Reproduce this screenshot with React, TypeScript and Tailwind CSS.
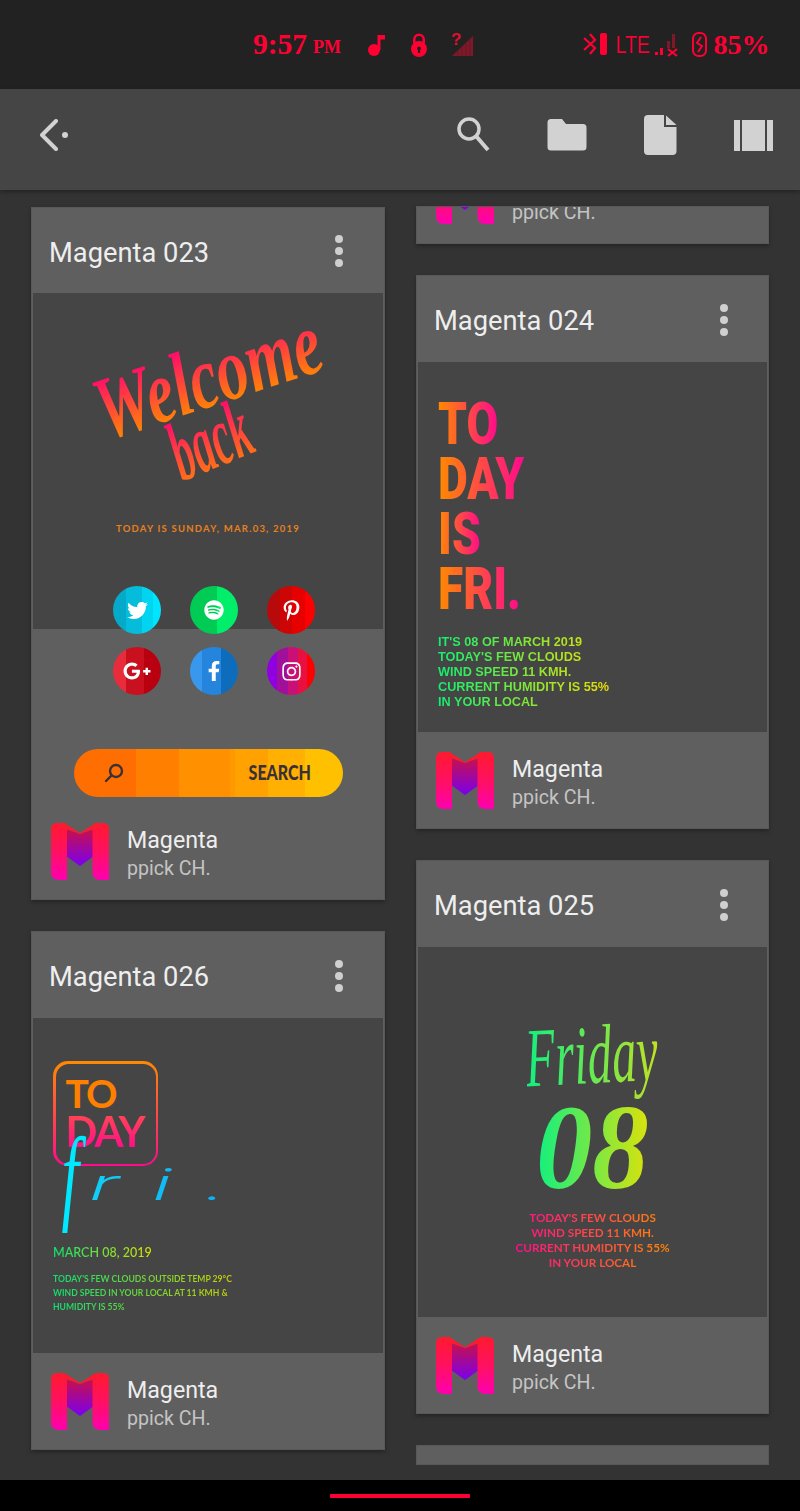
import React from "react";
import {
  FaTwitter,
  FaSpotify,
  FaPinterestP,
  FaGooglePlusG,
  FaFacebookF,
  FaInstagram,
} from "react-icons/fa";

const roboto = "font-['Roboto',sans-serif]";
const lato = "font-['Lato',sans-serif]";
const serif = "font-['Liberation_Serif',serif]";

const Logo = () => (
  <svg width="58" height="57" viewBox="0 0 58 57" className="shrink-0">
    <defs>
      <linearGradient id="logoOuter" x1="0" y1="0" x2="0" y2="1">
        <stop offset="0" stopColor="#ff1a2e" />
        <stop offset="0.5" stopColor="#ff1060" />
        <stop offset="1" stopColor="#ff00b0" />
      </linearGradient>
      <linearGradient id="logoInner" x1="0" y1="0" x2="0" y2="1">
        <stop offset="0" stopColor="#c8104a" />
        <stop offset="1" stopColor="#7a00ee" />
      </linearGradient>
    </defs>
    <path d="M15 6L29 11L43 6V33L29 43L15 33Z" fill="url(#logoInner)" />
    <path
      d="M6 0H13L16 2V57H8Q0 57 0 49V6Q0 0 6 0ZM45 0H52Q58 0 58 6V57H49.500Q41.500 57 41.500 49V2Z"
      fill="url(#logoOuter)"
    />
    <path d="M13 0L29 10L45 0V5L29 11L13 5Z" fill="#ff1a2e" />
  </svg>
);

type CardProps = {
  title: string;
  headerClass?: string;
  previewClass: string;
  children: React.ReactNode;
};

const Footer = () => (
  <div className="flex h-[96px] shrink-0 items-center pl-[19px]">
    <Logo />
    <div className={`ml-[18px] mt-[6px] ${roboto}`}>
      <p className="text-[23.200px] leading-[29px] text-[#eeeeee]">Magenta</p>
      <p className="text-[19.600px] leading-[28px] text-[#c4c4c4]">ppick CH.</p>
    </div>
  </div>
);

const Card = ({ title, headerClass = "h-[86px]", previewClass, children }: CardProps) => (
  <div className="border border-[#585858] bg-[#5f5f5f] shadow-[0_2px_4px_rgba(0,0,0,0.3)]">
    <div className={`flex items-center pt-[5px] pl-[17px] ${headerClass}`}>
      <span className={`${roboto} w-[286px] text-[27.300px] text-[#eeeeee]`}>{title}</span>
      <div className="-mt-[4px] flex flex-col gap-[4px]">
        <div className="h-[8px] w-[8px] rounded-full bg-[#cfcfcf]" />
        <div className="h-[8px] w-[8px] rounded-full bg-[#cfcfcf]" />
        <div className="h-[8px] w-[8px] rounded-full bg-[#cfcfcf]" />
      </div>
    </div>
    <div className={`mx-[1px] overflow-hidden ${previewClass}`}>{children}</div>
    <Footer />
  </div>
);

const circles = [
  { icon: <FaTwitter size={21} />, bg: "bg-[linear-gradient(90deg,#05a9c9_0_28%,#06bcdb_28%_60%,#00d4f0_60%_84%,#00e5ff_84%)]" },
  { icon: <FaSpotify size={20} />, bg: "bg-[linear-gradient(90deg,#00cc55_0_56%,#00ee6a_56%)]" },
  { icon: <FaPinterestP size={21} />, bg: "bg-[linear-gradient(90deg,#b80a0a_0_28%,#cc0505_28%_52%,#e60000_52%_80%,#ff0000_80%)]" },
  { icon: <FaGooglePlusG size={28} />, bg: "bg-[linear-gradient(90deg,#e82c3c_0_28%,#c8101f_28%_64%,#b80010_64%)]" },
  { icon: <FaFacebookF size={20} />, bg: "bg-[linear-gradient(90deg,#3898ee_0_24%,#2585dd_24%_64%,#0e6cbc_64%)]" },
  { icon: <FaInstagram size={21} />, bg: "bg-[linear-gradient(90deg,#9000e0_0_20%,#a0109a_20%_44%,#c81078_44%_64%,#e81040_64%_84%,#ff0000_84%)]" },
];

const WelcomePreview = () => (
  <div className="flex flex-col">
    <div
      className={`${serif} ml-[8px] mt-[33px] h-[100px] w-fit -rotate-[18deg] scale-x-[0.7] bg-linear-to-b/srgb from-[#ff0f68] from-20% to-[#ff8a00] to-85% bg-clip-text text-[90px] font-bold italic leading-[100px] text-transparent`}
    >
      Welcome
    </div>
    <div
      className={`${serif} -mt-[36px] ml-[95px] h-[100px] w-fit -rotate-[22deg] scale-x-[0.5] bg-linear-to-b/srgb from-[#ff0f68] from-20% to-[#ff7a10] to-85% bg-clip-text text-[84px] font-bold italic leading-[100px] text-transparent`}
    >
      back
    </div>
    <p
      className={`${lato} mt-[33px] ml-[83px] text-[9.500px] font-bold uppercase leading-[12px] tracking-[1.23px] text-[#e88020]`}
    >
      Today is Sunday, Mar.03, 2019
    </p>
    <div className="ml-[80px] mt-[51px] grid w-fit grid-cols-3 gap-x-[29px] gap-y-[13px]">
      {circles.map((c, i) => (
        <div
          key={i}
          className={`flex h-[48px] w-[48px] items-center justify-center rounded-full text-white ${c.bg}`}
        >
          {c.icon}
        </div>
      ))}
    </div>
    <div className="ml-[41px] mt-[54px] flex h-[48px] w-[269px] items-center justify-between rounded-full bg-[linear-gradient(90deg,#ff6e00_0_23%,#ff8000_23%_39%,#ff9000_39%_58%,#ff9900_58%_60%,#ffa200_60%_72%,#ffb000_72%_86%,#ffc000_86%)] pl-[30px] pr-[32px]">
      <svg width="20" height="20" viewBox="0 0 20 20" fill="none" stroke="#3a3038" strokeWidth="2.400">
        <circle cx="12" cy="8" r="6" />
        <path d="M7.500 12.500L2 18" strokeLinecap="round" />
      </svg>
      <span className={`${lato} origin-right -translate-y-[1px] scale-x-[0.8] text-[20px] font-black leading-none text-[#3a3038]`}>SEARCH</span>
    </div>
  </div>
);

const ToDayPreview = () => (
  <div className="flex flex-col pl-[20px] pt-[34px]">
    {["TO", "DAY", "IS", "FRI."].map((line) => (
      <div
        key={line}
        className={`${roboto} h-[55px] w-fit origin-left scale-x-[0.78] bg-linear-to-r/srgb from-[#ff8a00] to-[#ff0a8c] bg-clip-text text-[59px] font-black leading-[55px] text-transparent`}
      >
        {line}
      </div>
    ))}
    <div className="mt-[19px] w-[173px] bg-linear-to-r/srgb from-[#10f070] to-[#f0e000] bg-clip-text font-['Liberation_Sans',sans-serif] text-[12.700px] font-bold leading-[15px] text-transparent">
      <p className="whitespace-nowrap">IT&apos;S 08 OF MARCH 2019</p>
      <p className="whitespace-nowrap">TODAY&apos;S FEW CLOUDS</p>
      <p className="whitespace-nowrap">WIND SPEED 11 KMH.</p>
      <p className="whitespace-nowrap">CURRENT HUMIDITY IS 55%</p>
      <p className="whitespace-nowrap">IN YOUR LOCAL</p>
    </div>
  </div>
);

const FriPreview = () => (
  <div className="flex flex-col pl-[20px] pt-[43px]">
    <div className="h-[105px] w-[105px] rounded-[15px] bg-linear-to-b/srgb from-[#ff8a00] to-[#ff0a8c] p-[2.500px]">
      <div className="flex h-full flex-col rounded-[13px] bg-[#454545] pl-[10px] pt-[12px]">
        <span className={`${lato} h-[34px] text-[39px] font-bold leading-[34px] tracking-[-2px] text-[#ff8000]`}>TO</span>
        <span className={`${lato} mt-[2px] w-fit whitespace-nowrap bg-linear-to-b/srgb from-[#ff4a50] to-[#ff0a8c] bg-clip-text pr-[2px] text-[42px] font-bold leading-[38px] tracking-[-2px] text-transparent`}>
          DAY
        </span>
      </div>
    </div>
    <div className="-mt-[56px] -ml-[6px] flex items-baseline">
      <span
        className={`${serif} origin-left scale-x-[0.6] bg-[#00e8ff] bg-clip-text pl-[24px] pr-[40px] text-[105px] italic leading-[130px] text-transparent`}
      >
        f
      </span>
      <span
        className={`${roboto} -ml-[50px] origin-left -translate-y-[10px] scale-x-[2] bg-linear-to-r/srgb from-[#10d0f8] to-[#10a0f0] bg-clip-text pr-[4px] text-[44px] font-light italic leading-[60px] tracking-[17px] text-transparent`}
      >
        ri.
      </span>
    </div>
    <p className={`${lato} mt-[5px] w-[100px] whitespace-nowrap bg-linear-to-r/srgb from-[#10e070] to-[#d8e000] bg-clip-text text-[12.500px] font-semibold leading-[15px] text-transparent`}>
      MARCH 08, 2019
    </p>
    <div className={`${lato} mt-[12px] w-[186px] bg-linear-to-r/srgb from-[#10e070] to-[#d0d000] bg-clip-text text-[8.600px] font-bold leading-[14px] text-transparent`}>
      <p className="whitespace-nowrap">TODAY&apos;S FEW CLOUDS OUTSIDE TEMP 29°C</p>
      <p className="whitespace-nowrap">WIND SPEED IN YOUR LOCAL AT 11 KMH &amp;</p>
      <p className="whitespace-nowrap">HUMIDITY IS 55%</p>
    </div>
  </div>
);

const FridayPreview = () => (
  <div className="flex flex-col items-center">
    <div
      className={`${serif} ml-[4px] mt-[58px] h-[100px] w-fit -rotate-[3deg] scale-x-[0.58] whitespace-nowrap bg-linear-to-r/srgb from-[#10f080] to-[#c8e020] bg-clip-text pr-[10px] text-[84px] italic leading-[100px] text-transparent`}
    >
      Friday
    </div>
    <div
      className={`${serif} -mt-[17px] ml-[10px] h-[120px] w-fit scale-x-[0.94] bg-linear-to-r/srgb from-[#10f080] to-[#f0e000] bg-clip-text pr-[12px] text-[120px] font-bold italic leading-[120px] text-transparent`}
    >
      08
    </div>
    <div className={`${lato} mt-[2px] w-[160px] bg-linear-to-r/srgb from-[#ff0a8c] to-[#ff8a00] bg-clip-text text-center text-[11.700px] font-bold leading-[15px] text-transparent`}>
      <p className="whitespace-nowrap">TODAY&apos;S FEW CLOUDS</p>
      <p className="whitespace-nowrap">WIND SPEED 11 KMH.</p>
      <p className="whitespace-nowrap">CURRENT HUMIDITY IS 55%</p>
      <p className="whitespace-nowrap">IN YOUR LOCAL</p>
    </div>
  </div>
);

const StatusBar = () => (
  <div className="flex h-[89px] shrink-0 items-center bg-[#222222] pl-[253px] text-[#ff0033]">
    <span className={`${serif} text-[29.500px] font-bold leading-none`}>9:57</span>
    <span className={`${serif} ml-[6px] mt-[4px] text-[18px] font-bold leading-none`}>PM</span>
    <svg width="17" height="22" viewBox="0 0 17 22" className="ml-[27px]" fill="#ff0033">
      <circle cx="6" cy="16" r="6" />
      <path d="M9.500 16V1H17V5.500H12.500V16Z" />
    </svg>
    <svg width="18" height="25" viewBox="0 0 18 25" className="ml-[25px]" fill="#ff0033">
      <path d="M3 11V7.500a6 6 0 0 1 12 0V11H12.500V7.500a3.500 3.500 0 0 0-7 0V11Z" />
      <path
        fillRule="evenodd"
        d="M9 9a8 8 0 1 1 0 16a8 8 0 0 1 0-16ZM9 14.500a2 2 0 0 0-1 3.700V21h2v-2.800a2 2 0 0 0-1-3.700Z"
      />
    </svg>
    <svg width="23" height="25" viewBox="0 0 23 25" className="ml-[23px]">
      <path d="M1 24L22 4V24Z" fill="#801828" />
      <path d="M7 24V18M11 24V14M15 24V10M19 24V6" stroke="#5a1a26" strokeWidth="1" />
      <text x="0" y="13" fontSize="17" fontWeight="700" fill="#e0102e" fontFamily="Liberation Sans, sans-serif">?</text>
    </svg>
    <svg width="24" height="23" viewBox="0 0 24 23" className="ml-[109px]" fill="none">
      <path d="M1 5L12 15L7 21M1 17L12 7L7 1" stroke="#ff0033" strokeWidth="2.200" />
      <rect x="17" y="0" width="7" height="22" rx="2" fill="#ff0033" />
    </svg>
    <span className="ml-[9px] mt-[1px] origin-left scale-x-[0.85] font-['Liberation_Sans',sans-serif] text-[23px] leading-none">LTE</span>
    <svg width="24" height="24" viewBox="0 0 24 24" className="-ml-[2px]">
      <rect x="0" y="19" width="3" height="3" fill="#ff0033" />
      <rect x="5" y="15" width="3" height="7" fill="#ff0033" />
      <rect x="12" y="8" width="3" height="7" fill="#801828" />
      <rect x="17" y="1" width="3" height="14" fill="#801828" />
      <path d="M13 16L22 23M22 16L13 23" stroke="#ff0033" strokeWidth="2.200" />
    </svg>
    <svg width="15" height="25" viewBox="0 0 15 25" className="ml-[13px]" fill="none" stroke="#ff0033" strokeWidth="2">
      <rect x="1" y="1" width="13" height="23" rx="5.500" />
      <path d="M9 5L5 11L10 14L6 20" />
    </svg>
    <span className={`${serif} ml-[7px] text-[28px] font-bold leading-none`}>85%</span>
  </div>
);

const Toolbar = () => (
  <div className="flex h-[101px] shrink-0 items-center bg-[#454545] pb-[9px] pl-[40px] shadow-[0_2px_4px_rgba(0,0,0,0.3)]">
    <svg width="30" height="32" viewBox="0 0 30 32" fill="none" stroke="#d2d2d2">
      <path d="M16 2L2 16L16 30" strokeWidth="4" strokeLinecap="round" strokeLinejoin="round" />
      <circle cx="25" cy="16" r="3" fill="#d2d2d2" strokeWidth="0" />
    </svg>
    <svg width="36" height="36" viewBox="0 0 36 36" className="ml-[385px] -mt-[2px]" fill="none" stroke="#d2d2d2">
      <circle cx="14" cy="13" r="10" strokeWidth="3.500" />
      <path d="M21 20L33 34" strokeWidth="4" />
    </svg>
    <svg width="40" height="32" viewBox="0 0 40 32" className="ml-[56px]" fill="#d2d2d2">
      <path d="M4 0H15L19 5H36a3.500 3.500 0 0 1 3.500 3.500V28a3.500 3.500 0 0 1-3.500 3.500H4A3.500 3.500 0 0 1 0.500 28V3.500A3.500 3.500 0 0 1 4 0Z" />
    </svg>
    <svg width="33" height="40" viewBox="0 0 33 40" className="ml-[57px]" fill="#d2d2d2">
      <path d="M4 0H20V12H32.500V36a4 4 0 0 1-4 4H4a4 4 0 0 1-4-4V4a4 4 0 0 1 4-4Z" />
      <path d="M22 0.500L32.500 10H22Z" />
    </svg>
    <div className="ml-[57px] flex h-[31px] w-[39px] gap-[2px]">
      <div className="w-[6px] bg-[#d2d2d2]" />
      <div className="flex-1 bg-[#d2d2d2]" />
      <div className="w-[6px] bg-[#d2d2d2]" />
    </div>
  </div>
);

const App = () => {
  return (
    <div className="flex h-[1511px] w-[800px] flex-col overflow-hidden bg-[#333333]">
      <StatusBar />
      <Toolbar />
      <div className="flex min-h-0 flex-1 items-start gap-[31px] overflow-hidden px-[31px] pt-[16px]">
        <div className="flex w-[354px] shrink-0 flex-col gap-[31px] pt-[1px]">
          <Card
            title="Magenta 023"
            headerClass="h-[85px]"
            previewClass="h-[510px] bg-[linear-gradient(#454545_336px,transparent_336px)]"
          >
            <WelcomePreview />
          </Card>
          <Card title="Magenta 026" previewClass="h-[335px] bg-[#454545]">
            <FriPreview />
          </Card>
        </div>
        <div className="flex w-[353px] shrink-0 flex-col gap-[31px]">
          <div className="flex h-[38px] flex-col justify-end overflow-hidden border border-[#585858] bg-[#5f5f5f] shadow-[0_2px_4px_rgba(0,0,0,0.3)]">
            <Footer />
          </div>
          <Card title="Magenta 024" previewClass="h-[370px] bg-[#454545]">
            <ToDayPreview />
          </Card>
          <Card title="Magenta 025" previewClass="h-[370px] bg-[#454545]">
            <FridayPreview />
          </Card>
          <div className="h-[20px] border border-[#585858] bg-[#5f5f5f]" />
        </div>
      </div>
      <div className="flex h-[31px] shrink-0 items-center justify-center bg-black">
        <div className="h-[4px] w-[140px] rounded-[1px] bg-[#ff0033]" />
      </div>
    </div>
  );
};

export default App;
